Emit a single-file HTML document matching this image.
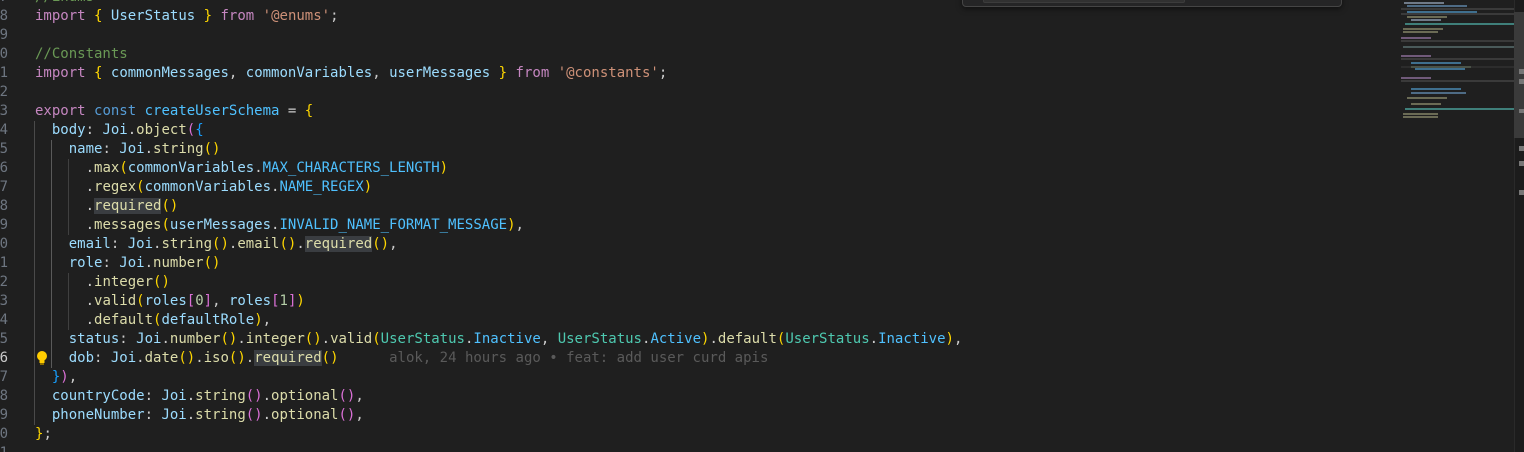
<!DOCTYPE html>
<html><head><meta charset="utf-8"><style>
html,body{margin:0;padding:0;background:#1f1f1f;width:1524px;height:452px;overflow:hidden;position:relative}
#w{position:absolute;left:0;top:2px;width:1524px;height:452px}
.ln{position:absolute;left:-12px;width:20px;text-align:right;font:14px/19px "DejaVu Sans Mono","Liberation Mono",monospace;color:#6e7681}
.cl{position:absolute;left:35px;white-space:pre;font:14px/19px "DejaVu Sans Mono","Liberation Mono",monospace;color:#cccccc}
.g{position:absolute;width:1px;background:#404040}
.k{color:#C586C0}.b{color:#569CD6}.v{color:#9CDCFE}.f{color:#DCDCAA}.s{color:#CE9178}.c{color:#6A9955}.n{color:#4FC1FF}.t{color:#4EC9B0}.num{color:#B5CEA8}
.y{color:#FFD700}.p{color:#DA70D6}.u{color:#179FFF}
.h{background:#3a3d41}
.bl{color:#5a5a5a}
.mm{position:absolute;height:2px}
</style></head><body>
<div id="w">
<div class="ln" style="top:-14px">7</div>
<div class="ln" style="top:5px">8</div>
<div class="ln" style="top:24px">9</div>
<div class="ln" style="top:43px">0</div>
<div class="ln" style="top:62px">1</div>
<div class="ln" style="top:81px">2</div>
<div class="ln" style="top:100px">3</div>
<div class="ln" style="top:119px">4</div>
<div class="ln" style="top:138px">5</div>
<div class="ln" style="top:157px">6</div>
<div class="ln" style="top:176px">7</div>
<div class="ln" style="top:195px">8</div>
<div class="ln" style="top:214px">9</div>
<div class="ln" style="top:233px">0</div>
<div class="ln" style="top:252px">1</div>
<div class="ln" style="top:271px">2</div>
<div class="ln" style="top:290px">3</div>
<div class="ln" style="top:309px">4</div>
<div class="ln" style="top:328px">5</div>
<div class="ln" style="top:347px;color:#cccccc">6</div>
<div class="ln" style="top:366px">7</div>
<div class="ln" style="top:385px">8</div>
<div class="ln" style="top:404px">9</div>
<div class="ln" style="top:423px">0</div>
<div class="ln" style="top:442px">1</div>

<div class="g" style="left:34px;top:119px;height:304px;background:#4a4a4a"></div>
<div class="g" style="left:51px;top:138px;height:228px;background:#5a5a5a"></div>
<div class="g" style="left:68px;top:157px;height:76px"></div>
<div class="g" style="left:68px;top:271px;height:57px"></div>

<div class="cl c" style="top:-14px">//Enums</div>
<div class="cl" style="top:5px"><span class="k">import</span> <span class="y">{</span> <span class="v">UserStatus</span> <span class="y">}</span> <span class="k">from</span> <span class="s">'@enums'</span>;</div>
<div class="cl c" style="top:43px">//Constants</div>
<div class="cl" style="top:62px"><span class="k">import</span> <span class="y">{</span> <span class="v">commonMessages</span>, <span class="v">commonVariables</span>, <span class="v">userMessages</span> <span class="y">}</span> <span class="k">from</span> <span class="s">'@constants'</span>;</div>
<div class="cl" style="top:100px"><span class="k">export</span> <span class="b">const</span> <span class="n">createUserSchema</span> = <span class="y">{</span></div>
<div class="cl" style="top:119px">  <span class="v">body</span>: <span class="v">Joi</span>.<span class="f">object</span><span class="p">(</span><span class="u">{</span></div>
<div class="cl" style="top:138px">    <span class="v">name</span>: <span class="v">Joi</span>.<span class="f">string</span><span class="y">()</span></div>
<div class="cl" style="top:157px">      .<span class="f">max</span><span class="y">(</span><span class="v">commonVariables</span>.<span class="n">MAX_CHARACTERS_LENGTH</span><span class="y">)</span></div>
<div class="cl" style="top:176px">      .<span class="f">regex</span><span class="y">(</span><span class="v">commonVariables</span>.<span class="n">NAME_REGEX</span><span class="y">)</span></div>
<div class="cl" style="top:195px">      .<span class="f h">required</span><span class="y">()</span></div>
<div class="cl" style="top:214px">      .<span class="f">messages</span><span class="y">(</span><span class="v">userMessages</span>.<span class="n">INVALID_NAME_FORMAT_MESSAGE</span><span class="y">)</span>,</div>
<div class="cl" style="top:233px">    <span class="v">email</span>: <span class="v">Joi</span>.<span class="f">string</span><span class="y">()</span>.<span class="f">email</span><span class="y">()</span>.<span class="f h">required</span><span class="y">()</span>,</div>
<div class="cl" style="top:252px">    <span class="v">role</span>: <span class="v">Joi</span>.<span class="f">number</span><span class="y">()</span></div>
<div class="cl" style="top:271px">      .<span class="f">integer</span><span class="y">()</span></div>
<div class="cl" style="top:290px">      .<span class="f">valid</span><span class="y">(</span><span class="v">roles</span><span class="p">[</span><span class="num">0</span><span class="p">]</span>, <span class="v">roles</span><span class="p">[</span><span class="num">1</span><span class="p">]</span><span class="y">)</span></div>
<div class="cl" style="top:309px">      .<span class="f">default</span><span class="y">(</span><span class="v">defaultRole</span><span class="y">)</span>,</div>
<div class="cl" style="top:328px">    <span class="v">status</span>: <span class="v">Joi</span>.<span class="f">number</span><span class="y">()</span>.<span class="f">integer</span><span class="y">()</span>.<span class="f">valid</span><span class="y">(</span><span class="t">UserStatus</span>.<span class="n">Inactive</span>, <span class="t">UserStatus</span>.<span class="n">Active</span><span class="y">)</span>.<span class="f">default</span><span class="y">(</span><span class="t">UserStatus</span>.<span class="n">Inactive</span><span class="y">)</span>,</div>
<div class="cl" style="top:347px">    <span class="v">dob</span>: <span class="v">Joi</span>.<span class="f">date</span><span class="y">()</span>.<span class="f">iso</span><span class="y">()</span>.<span class="f h">required</span><span class="y">()</span>      <span class="bl">alok, 24 hours ago • feat: add user curd apis</span></div>
<div class="cl" style="top:366px">  <span class="u">}</span><span class="p">)</span>,</div>
<div class="cl" style="top:385px">  <span class="v">countryCode</span>: <span class="v">Joi</span>.<span class="f">string</span><span class="p">()</span>.<span class="f">optional</span><span class="p">()</span>,</div>
<div class="cl" style="top:404px">  <span class="v">phoneNumber</span>: <span class="v">Joi</span>.<span class="f">string</span><span class="p">()</span>.<span class="f">optional</span><span class="p">()</span>,</div>
<div class="cl" style="top:423px"><span class="y">}</span>;</div>

<svg style="position:absolute;left:36px;top:348px" width="12" height="16" viewBox="0 0 12 16"><circle cx="6" cy="6" r="5" fill="#FFCC00"/><rect x="3.5" y="9" width="5" height="4" fill="#FFCC00"/><rect x="4" y="13" width="4" height="2" fill="#8a6d00"/></svg>
</div>

<div style="position:absolute;left:962px;top:-10px;width:378px;height:15px;border:1px solid #454545;border-radius:4px;background:#252526;box-shadow:0 2px 6px rgba(0,0,0,.5)"></div>
<div style="position:absolute;left:983px;top:-6px;width:200px;height:7px;border:1px solid #3c3c3c;border-radius:2px;background:#313131"></div>

<div style="position:absolute;left:1401px;top:0;width:113px;height:122px">
<div class="mm" style="left:3px;top:2px;width:40px;background:#6f7a88"></div>
<div class="mm" style="left:6px;top:5px;width:60px;background:#4e6b85"></div>
<div class="mm" style="left:0;top:8px;width:113px;background:#3a3a3a"></div>
<div class="mm" style="left:6px;top:11px;width:70px;background:#3f6f8e"></div>
<div class="mm" style="left:0;top:13px;width:113px;background:#3a3a3a"></div>
<div class="mm" style="left:6px;top:16px;width:40px;background:#6b6b55"></div>
<div class="mm" style="left:10px;top:19px;width:30px;background:#6f7a88"></div>
<div class="mm" style="left:4px;top:23px;width:110px;background:#3f7f7a"></div>
<div class="mm" style="left:2px;top:28px;width:40px;background:#6b6b55"></div>
<div class="mm" style="left:2px;top:31px;width:35px;background:#6b6b55"></div>
<div class="mm" style="left:0;top:37px;width:30px;background:#705a7a"></div>
<div class="mm" style="left:0;top:40px;width:113px;background:#3a3a3a"></div>
<div class="mm" style="left:2px;top:46px;width:113px;background:#4a5a5a"></div>
<div class="mm" style="left:0;top:55px;width:30px;background:#705a7a"></div>
<div class="mm" style="left:0;top:58px;width:113px;background:#3a3a3a"></div>
<div class="mm" style="left:10px;top:62px;width:50px;background:#3f6f8e"></div>
<div class="mm" style="left:10px;top:66px;width:60px;background:#5a6a55"></div>
<div class="mm" style="left:0;top:66px;width:113px;background:#3a3a3a;opacity:.5"></div>
<div class="mm" style="left:14px;top:68px;width:50px;background:#3f6f8e"></div>
<div class="mm" style="left:0;top:77px;width:30px;background:#705a7a"></div>
<div class="mm" style="left:0;top:80px;width:113px;background:#3a3a3a"></div>
<div class="mm" style="left:10px;top:88px;width:50px;background:#3f6f8e"></div>
<div class="mm" style="left:10px;top:92px;width:55px;background:#4e6b85"></div>
<div class="mm" style="left:6px;top:97px;width:40px;background:#6b6b55"></div>
<div class="mm" style="left:10px;top:103px;width:30px;background:#6b6b55"></div>
<div class="mm" style="left:4px;top:108px;width:110px;background:#3f7f7a"></div>
<div class="mm" style="left:2px;top:113px;width:35px;background:#6b6b55"></div>
<div class="mm" style="left:2px;top:116px;width:35px;background:#6b6b55"></div>
</div>
<div style="position:absolute;left:1514px;top:0;width:10px;height:452px;background:#1c1c1c;border-left:1px solid #2a2a2a"></div>
<div style="position:absolute;left:1514px;top:12px;width:10px;height:126px;background:#3a3a3a"></div>
<div style="position:absolute;left:1519px;top:69px;width:5px;height:5px;background:#777"></div>
<div style="position:absolute;left:1519px;top:79px;width:5px;height:5px;background:#777"></div>
<div style="position:absolute;left:1519px;top:109px;width:5px;height:4px;background:#777"></div>
<div style="position:absolute;left:1519px;top:146px;width:5px;height:5px;background:#777"></div>
<div style="position:absolute;left:1519px;top:161px;width:5px;height:5px;background:#777"></div>
<div style="position:absolute;left:1519px;top:190px;width:5px;height:5px;background:#777"></div>
</body></html>
